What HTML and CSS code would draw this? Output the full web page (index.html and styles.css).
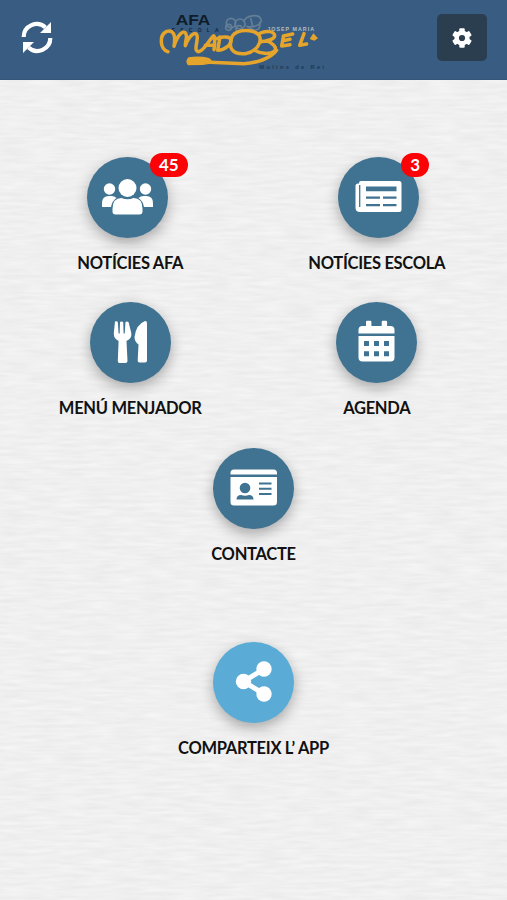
FILE: index.html
```html
<!DOCTYPE html>
<html lang="ca">
<head>
    <meta charset="UTF-8">
    <meta name="viewport" content="width=device-width, initial-scale=1.0">
    <title>AFA Escola Madorell</title>
    <link rel="stylesheet" href="styles.css">
</head>
<body>

    <!-- paper texture -->
    <svg class="paper" aria-hidden="true">
        <filter id="paper" x="0" y="0" width="100%" height="100%" color-interpolation-filters="sRGB">
            <feTurbulence type="fractalNoise" baseFrequency="0.035 0.28" numOctaves="2" seed="4" />
            <feColorMatrix values="0.06 0 0 0 0.909  0.06 0 0 0 0.909  0.06 0 0 0 0.909  0 0 0 0 1" />
        </filter>
        <rect width="100%" height="100%" filter="url(#paper)" />
    </svg>

    <header>
        <a class="refresh" href="#" aria-label="Actualitza">
            <svg viewBox="0 0 32 34">
                <path d="M2.7 16A13 13 0 0 1 24.5 6.5M29.3 17A13 13 0 0 1 7.5 26.5" fill="none" stroke="#fff" stroke-width="4.2" />
                <path d="M30 1v11H19zM2 32V21h11z" fill="#fff" />
            </svg>
        </a>

        <svg class="logo" viewBox="0 0 570 240">
            <g fill="none" stroke="#8296a3" stroke-width="5" opacity=".6">
                <circle cx="243" cy="69" r="14" />
                <circle cx="236" cy="82" r="9" />
                <circle cx="270" cy="72" r="15" />
                <circle cx="267" cy="86" r="9" />
                <path d="M280 66c8-22 45-24 52-10s-12 27-40 24c18 14 44 16 36-14M302 54l6 26" />
            </g>
            <text class="logo-afa" x="77" y="76" textLength="104" lengthAdjust="spacingAndGlyphs">AFA</text>
            <text class="logo-escola" x="65" y="95" textLength="141">ESCOLA</text>
            <text class="logo-name" x="352" y="92" textLength="140">JOSEP MARIA</text>
            <g fill="none" stroke="#e5a42b" stroke-width="10.5" stroke-linecap="round" stroke-linejoin="round">
                <path d="M54 155C30 150 26 105 50 94C70 88 78 104 72 139C84 100 103 88 108 102C113 113 105 124 106 137C117 106 137 92 141 106C146 122 128 153 146 155C161 153 173 126 190 108C194 104 196 128 192 149M166 136h26" />
                <path d="M210 111L203 151C225 151 245 132 243 120C240 108 216 110 202 115" />
                <path d="M247 108C262 87 311 85 328 107C337 125 321 155 286 161C249 164 231 145 247 108" />
                <path d="M330 100C348 90 373 94 374 107C372 120 349 122 334 125M350 122C368 129 382 142 374 153C359 165 328 160 316 152M380 151C363 175 320 189 282 191L180 187" />
                <path d="M400 111L395 138L420 134M400 108L428 102M399 122L420 118M462 101L449 136L470 132" />
            </g>
            <path d="M116 174Q145 168 174 175Q190 181 177 190L158 193L115 194Q107 184 116 174Z" fill="#e5a42b" stroke="#e5a42b" stroke-width="4" />
            <path d="M490 100l14 15-11 7-14-5z" fill="#e5a42b" />
            <text class="logo-town" x="328" y="207" textLength="194">Molins de Rei</text>
        </svg>

        <button class="settings" aria-label="Configuració">
            <svg viewBox="-10 -10 20 20">
                <g fill="#fff">
                    <circle r="7.6" />
                    <rect x="-2.7" y="-9.8" width="5.4" height="19.6" rx="1" />
                    <rect x="-2.7" y="-9.8" width="5.4" height="19.6" rx="1" transform="rotate(60)" />
                    <rect x="-2.7" y="-9.8" width="5.4" height="19.6" rx="1" transform="rotate(120)" />
                </g>
                <circle r="3.1" fill="#2b3e50" />
            </svg>
        </button>
    </header>

    <main>
        <nav class="menu">
            <a class="item" href="#">
                <span class="icon-row">
                    <span class="circle">
                        <svg viewBox="0 0 81 81" fill="#fff">
                            <circle cx="22.5" cy="32" r="5.7" />
                            <circle cx="58.5" cy="32" r="5.7" />
                            <path d="M15 50v-4q0-7 7-7h2.500q3 0 5 2-4.500 3-5.500 9z" />
                            <path d="M66 50v-4q0-7-7-7h-2.500q-3 0-5 2 4.500 3 5.500 9z" />
                            <circle cx="40.500" cy="31" r="9" />
                            <path d="M25.500 54.500v-2.500q0-11 9-11 6 2.500 12 0 9 0 9 11v2.500q0 3-3 3h-24q-3 0-3-3z" />
                        </svg>
                    </span>
                    <span class="badge">45</span>
                </span>
                <span class="label">NOTÍCIES AFA</span>
            </a>
            <a class="item" href="#">
                <span class="icon-row">
                    <span class="circle">
                        <svg viewBox="0 0 81 81">
                            <path d="M23 24h38q2.500 0 2.500 2.500v26q0 2.500-2.500 2.500H22q-4.500 0-4.500-4.500V29q0-2.500 2.500-2.500h1V26q0-2 2-2z" fill="#fff" />
                            <path d="M21.700 28v22" stroke="#3f7391" stroke-width="1.300" />
                            <path d="M28 29.500h30.500v4.800H28zM28 39.500h14v2.300H28zM45 39.500h13.500v2.300H45zM28 47h14v2.300H28zM45 47h13.500v2.300H45z" fill="#3f7391" />
                        </svg>
                    </span>
                    <span class="badge">3</span>
                </span>
                <span class="label">NOTÍCIES ESCOLA</span>
            </a>
            <a class="item" href="#">
                <span class="circle">
                    <svg viewBox="0 0 81 81" fill="#fff">
                        <path d="M25 19.500q1.700-.8 2.800.5l.8 11.500h1.100L30 20q1.600-1.200 3.200 0l.4 11.500h1.100l.8-11.500q1.400-1.200 3 0l2.800 11q.8 5.500-4.800 8l1 20q-.1 2-2 2h-6q-1.700 0-1.700-2l.8-20q-5.100-2.500-4.800-8z" />
                        <path d="M57 21v37.500q0 2-2 2h-5.500q-2 0-1.800-2l.8-16q-4-2.500-4-7.500Q46 22.500 55 19q2-.2 2 2z" />
                    </svg>
                </span>
                <span class="label">MENÚ MENJADOR</span>
            </a>
            <a class="item" href="#">
                <span class="circle">
                    <svg viewBox="0 0 81 81">
                        <path d="M22.500 31.500V28q0-4 4-4H30v-4q0-1.200 1.200-1.200h3q1.200 0 1.200 1.200v4h10.300v-4q0-1.200 1.200-1.200h3q1.200 0 1.200 1.200v4h3.400q4 0 4 4v3.500zM22.500 34h36v21.500q0 4-4 4h-28q-4 0-4-4z" fill="#fff" />
                        <path d="M28 39h5v5h-5zM38 39h5v5h-5zM48 39h5v5h-5zM28 49.300h5v5h-5zM38 49.300h5v5h-5zM48 49.300h5v5h-5z" fill="#3f7391" />
                    </svg>
                </span>
                <span class="label">AGENDA</span>
            </a>
            <a class="item wide" href="#">
                <span class="circle">
                    <svg viewBox="0 0 81 81">
                        <path d="M17.500 26.500V25q0-3.500 3.500-3.500h39.500q3.500 0 3.500 3.500v1.500zM17.500 29H64v25q0 3.500-3.500 3.500H21q-3.500 0-3.500-3.500z" fill="#fff" />
                        <circle cx="32" cy="40" r="5.300" fill="#3f7391" />
                        <path d="M23.500 51.500q0-4.500 4.500-4.500 4 1.500 8 0 4.500 0 4.500 4.500zM46 34.500h12.500v2H46zM46 39.700h12.500v2H46zM46 45h12.500v2H46z" fill="#3f7391" />
                    </svg>
                </span>
                <span class="label">CONTACTE</span>
            </a>
        </nav>

        <a class="item share" href="#">
            <span class="circle">
                <svg viewBox="0 0 81 81" fill="#fff">
                    <path d="M51 27L30.500 39.500L51 52" fill="none" stroke="#fff" stroke-width="5" />
                    <circle cx="30.500" cy="39.500" r="7.700" />
                    <circle cx="51" cy="27" r="7.700" />
                    <circle cx="51" cy="52" r="7.700" />
                </svg>
            </span>
            <span class="label">COMPARTEIX L’ APP</span>
        </a>
    </main>

</body>
</html>
```
FILE: styles.css
```css
body {
    font-family: Lato, "Open Sans", sans-serif;
    margin: 0;
    min-height: 100vh;
    background-color: #efefef;
}
.paper {
    position: absolute;
    top: 0;
    left: 0;
    width: 100%;
    height: 100%;
    z-index: -1;
}
header {
    display: flex;
    align-items: center;
    justify-content: space-between;
    height: 80px;
    padding: 0 20px 0 21px;
    box-sizing: border-box;
    background-color: #385c82;
    border-bottom: 1px solid #345577;
}
.refresh {
    width: 32px;
    height: 34px;
    margin-top: -4px;
}
.refresh svg,
.circle svg {
    display: block;
    width: 100%;
    height: 100%;
}
.logo {
    width: 190px;
    height: 80px;
}
.logo-afa {
    font: bold 42px "Liberation Sans", sans-serif;
    fill: #101c29;
}
.logo-escola {
    font: bold 15px "Liberation Sans", sans-serif;
    fill: #14263a;
}
.logo-name {
    font: bold 16px "Liberation Sans", sans-serif;
    fill: #b5bec0;
}
.logo-town {
    font: bold 17px "Liberation Sans", sans-serif;
    fill: #213953;
}
.settings {
    display: flex;
    align-items: center;
    justify-content: center;
    width: 50px;
    height: 47px;
    margin-top: -4px;
    padding: 0;
    border: 0;
    border-radius: 5px;
    background-color: #2b3e50;
}
.settings svg {
    width: 20px;
    height: 20px;
}
main {
    padding: 77px 7px 0;
}
.menu {
    display: grid;
    grid-template-columns: 1fr 1fr;
    row-gap: 29.3px;
}
.item {
    display: flex;
    flex-direction: column;
    align-items: center;
    color: #111;
    text-decoration: none;
}
.wide {
    grid-column: 1 / 3;
}
.icon-row {
    display: flex;
}
.circle {
    width: 81px;
    height: 81px;
    border-radius: 50%;
    background-color: #3f7391;
    box-shadow: 0 5px 14px rgba(0, 0, 0, 0.3);
}
.badge {
    height: 24px;
    margin: -4px -14px 0 -18px;
    padding: 0 9px;
    border-radius: 12px;
    background-color: #fb0207;
    color: #fff;
    font-size: 17px;
    font-weight: bold;
    line-height: 24px;
    z-index: 1;
}
.label {
    height: 20px;
    margin-top: 15px;
    font-size: 16.5px;
    font-weight: bold;
    letter-spacing: -0.3px;
    line-height: 20px;
    white-space: nowrap;
}
.share {
    margin-top: 78px;
}
.share .circle {
    background-color: #5aabd6;
}
```
